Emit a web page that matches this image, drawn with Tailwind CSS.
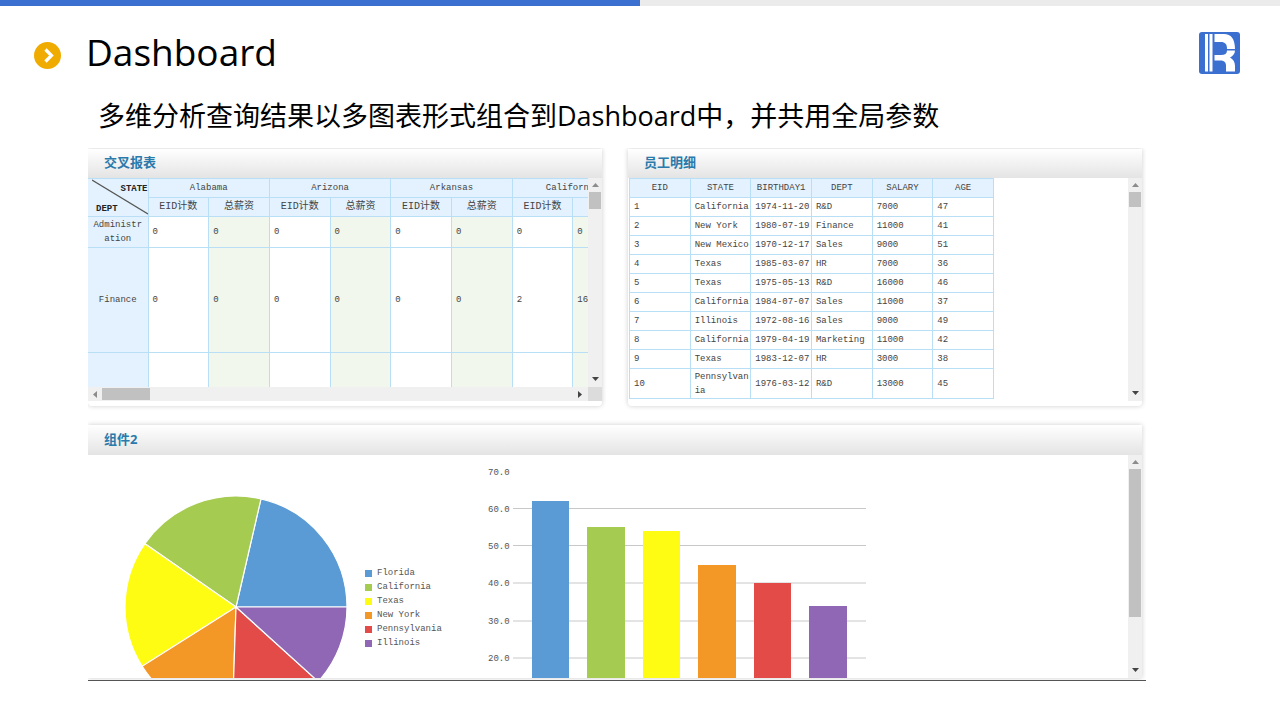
<!DOCTYPE html>
<html lang="zh-CN">
<head>
<meta charset="utf-8">
<meta name="viewport" content="width=device-width, initial-scale=1">
<title>Dashboard</title>
<script src="https://cdn.jsdelivr.net/npm/@tailwindcss/browser@4"></script>
</head>
<body class="bg-white text-black font-['Open_Sans','Noto_Sans_CJK_SC',sans-serif]">
<div class="flex h-[6px]"><div class="w-1/2 bg-[#3b6fd0]"></div><div class="w-1/2 bg-[#ebebeb]"></div></div>

<header class="flex items-start justify-between pl-[34px] pr-[40px] pt-[18px]">
  <div class="flex items-center gap-[25px]">
    <svg class="mt-[6px] size-[27px]" viewBox="0 0 27 27" aria-hidden="true"><circle cx="13.500" cy="13.500" r="13.500" fill="#f0ab00"/><path d="M11.500 7.500l6 6-6 6" fill="none" stroke="#fff" stroke-width="3.200"/></svg>
    <h1 class="text-[37px] leading-[56px]">Dashboard</h1>
  </div>
  <svg class="mt-[8px] h-[42px] w-[41px]" viewBox="0 0 41 42" role="img" aria-label="Logo">
    <rect width="41" height="42" rx="3" fill="#3b6fd0"/>
    <path d="M6 2h3v37.500H6zM10.500 2h3v37.500h-3z" fill="#fff"/>
    <path d="M15.500 2H25C32 2 36 7 36 17H28C28 12 26 10 22 10H15.500z" fill="#fff"/>
    <path d="M28 18.500H36C36 21.500 34 24 31 25.500C34 27 36 30 36 34V39.500H27V34C27 30 25 28.500 21 28.500H15.500V23H22C26 23 28 21.500 28 18.500z" fill="#fff"/>
  </svg>
</header>

<p class="pl-[98px] pt-[17px] text-[27px] leading-[38px]">多维分析查询结果以多图表形式组合到Dashboard中，并共用全局参数</p>

<main class="ml-[88px] mr-[134px] mt-[13px] overflow-hidden border-b border-[#555] pb-[2px] pr-[4px] pt-px">
  <div class="grid grid-cols-2 gap-[26px]">
    <section class="rounded-b-sm bg-white shadow-[0_0_5px_rgba(0,0,0,0.2)]" aria-labelledby="t1">
      <h2 id="t1" class="h-[29px] bg-linear-to-b from-white to-[#e4e4e4] pl-4 text-[13px] leading-[27px] font-bold text-[#2a7aab]">交叉报表</h2>
      <div class="flex">
        <div class="h-[209px] min-w-0 flex-1 overflow-hidden">
          <table class="w-[546px] table-fixed border-collapse font-['Liberation_Mono','Noto_Sans_CJK_SC',monospace] text-[9px] leading-[14px] text-[#444]">
            <colgroup><col class="w-[60px]"><col span="8"></colgroup>
            <thead class="bg-[#e3f2fe] text-center text-[10px]">
              <tr class="h-[19px] text-[9px]">
                <th rowspan="2" class="relative border-b border-r border-t border-[#b8dff6] p-0 font-bold text-[#222]">
                  <svg class="absolute left-[4px] top-0 h-[36px] w-[56px]" viewBox="0 0 56 36" aria-hidden="true"><path d="M0 1L56 35" stroke="#555" stroke-width="1.300" fill="none"/></svg>
                  <div class="flex h-[37px] flex-col justify-between pt-[3px]"><span class="text-right">STATE</span><span class="pl-2 text-left">DEPT</span></div>
                </th>
                <th colspan="2" class="border border-[#b8dff6] p-0 font-normal">Alabama</th>
                <th colspan="2" class="border border-[#b8dff6] p-0 font-normal">Arizona</th>
                <th colspan="2" class="border border-[#b8dff6] p-0 font-normal">Arkansas</th>
                <th colspan="2" class="border border-[#b8dff6] p-0 font-normal">California</th>
              </tr>
              <tr class="h-[19px]">
                <th class="border border-[#b8dff6] p-0 font-normal">EID计数</th><th class="border border-[#b8dff6] p-0 font-normal">总薪资</th>
                <th class="border border-[#b8dff6] p-0 font-normal">EID计数</th><th class="border border-[#b8dff6] p-0 font-normal">总薪资</th>
                <th class="border border-[#b8dff6] p-0 font-normal">EID计数</th><th class="border border-[#b8dff6] p-0 font-normal">总薪资</th>
                <th class="border border-[#b8dff6] p-0 font-normal">EID计数</th><th class="border border-[#b8dff6] p-0 font-normal">总薪资</th>
              </tr>
            </thead>
            <tbody>
              <tr class="h-[31px]">
                <th class="border-y border-r border-[#b8dff6] bg-[#e3f2fe] p-0 text-center font-normal">Administr<br>ation</th>
                <td class="border border-[#b8dff6] px-1 py-0">0</td><td class="border border-[#b8dff6] bg-[#f1f7ed] px-1 py-0">0</td>
                <td class="border border-[#b8dff6] px-1 py-0">0</td><td class="border border-[#b8dff6] bg-[#f1f7ed] px-1 py-0">0</td>
                <td class="border border-[#b8dff6] px-1 py-0">0</td><td class="border border-[#b8dff6] bg-[#f1f7ed] px-1 py-0">0</td>
                <td class="border border-[#b8dff6] px-1 py-0">0</td><td class="border border-[#b8dff6] bg-[#f1f7ed] px-1 py-0">0</td>
              </tr>
              <tr class="h-[105px]">
                <th class="border-y border-r border-[#b8dff6] bg-[#e3f2fe] p-0 text-center font-normal">Finance</th>
                <td class="border border-[#b8dff6] px-1 py-0">0</td><td class="border border-[#b8dff6] bg-[#f1f7ed] px-1 py-0">0</td>
                <td class="border border-[#b8dff6] px-1 py-0">0</td><td class="border border-[#b8dff6] bg-[#f1f7ed] px-1 py-0">0</td>
                <td class="border border-[#b8dff6] px-1 py-0">0</td><td class="border border-[#b8dff6] bg-[#f1f7ed] px-1 py-0">0</td>
                <td class="border border-[#b8dff6] px-1 py-0">2</td><td class="border border-[#b8dff6] bg-[#f1f7ed] px-1 py-0">16000</td>
              </tr>
              <tr class="h-[60px]">
                <th class="border-y border-r border-[#b8dff6] bg-[#e3f2fe] p-0"></th>
                <td class="border border-[#b8dff6]"></td><td class="border border-[#b8dff6] bg-[#f1f7ed]"></td>
                <td class="border border-[#b8dff6]"></td><td class="border border-[#b8dff6] bg-[#f1f7ed]"></td>
                <td class="border border-[#b8dff6]"></td><td class="border border-[#b8dff6] bg-[#f1f7ed]"></td>
                <td class="border border-[#b8dff6]"></td><td class="border border-[#b8dff6] bg-[#f1f7ed]"></td>
              </tr>
            </tbody>
          </table>
        </div>
        <div class="flex w-[14px] flex-col items-center bg-[#f0f0f0]">
          <button type="button" aria-label="向上滚动" class="flex h-[14px] w-full items-center justify-center"><svg class="h-[4px] w-[7px]" viewBox="0 0 7 4"><path d="M0 4L3.500 0 7 4z" fill="#8c8c8c"/></svg></button>
          <div class="h-[17px] w-[12px] bg-[#c1c1c1]"></div>
          <button type="button" aria-label="向下滚动" class="mt-auto flex h-[16px] w-full items-center justify-center"><svg class="h-[4px] w-[7px]" viewBox="0 0 7 4"><path d="M0 0h7L3.500 4z" fill="#444"/></svg></button>
        </div>
      </div>
      <div class="flex h-[14px] items-center bg-[#f0f0f0]">
        <button type="button" aria-label="向左滚动" class="flex h-full w-[14px] items-center justify-center"><svg class="h-[7px] w-[4px]" viewBox="0 0 4 7"><path d="M4 0v7L0 3.500z" fill="#8c8c8c"/></svg></button>
        <div class="h-[12px] w-[48px] bg-[#c1c1c1]"></div>
        <button type="button" aria-label="向右滚动" class="ml-auto flex h-full w-[16px] items-center justify-center"><svg class="h-[7px] w-[4px]" viewBox="0 0 4 7"><path d="M0 0v7L4 3.500z" fill="#444"/></svg></button>
        <div class="h-full w-[14px] bg-[#dcdcdc]"></div>
      </div>
      <div class="h-[5px]"></div>
    </section>

    <section class="rounded-b-sm bg-white shadow-[0_0_5px_rgba(0,0,0,0.2)]" aria-labelledby="t2">
      <h2 id="t2" class="h-[29px] bg-linear-to-b from-white to-[#e4e4e4] pl-4 text-[13px] leading-[27px] font-bold text-[#2a7aab]">员工明细</h2>
      <div class="flex h-[223px]">
        <div class="min-w-0 flex-1 overflow-hidden pl-px">
          <table class="w-[365px] table-fixed border-collapse font-['Liberation_Mono',monospace] text-[9px] leading-[14px] whitespace-nowrap text-[#444] [&_td]:border [&_td]:border-[#b8dff6] [&_td]:py-0 [&_td]:pl-1 [&_td]:pr-0 [&_th]:border [&_th]:border-[#b8dff6] [&_th]:p-0 [&_th]:font-normal">
            <thead class="bg-[#e3f2fe]"><tr class="h-[19px]"><th>EID</th><th>STATE</th><th>BIRTHDAY1</th><th>DEPT</th><th>SALARY</th><th>AGE</th></tr></thead>
            <tbody>
              <tr class="h-[19px]"><td>1</td><td>California</td><td>1974-11-20</td><td>R&amp;D</td><td>7000</td><td>47</td></tr>
              <tr class="h-[19px]"><td>2</td><td>New York</td><td>1980-07-19</td><td>Finance</td><td>11000</td><td>41</td></tr>
              <tr class="h-[19px]"><td>3</td><td>New Mexico</td><td>1970-12-17</td><td>Sales</td><td>9000</td><td>51</td></tr>
              <tr class="h-[19px]"><td>4</td><td>Texas</td><td>1985-03-07</td><td>HR</td><td>7000</td><td>36</td></tr>
              <tr class="h-[19px]"><td>5</td><td>Texas</td><td>1975-05-13</td><td>R&amp;D</td><td>16000</td><td>46</td></tr>
              <tr class="h-[19px]"><td>6</td><td>California</td><td>1984-07-07</td><td>Sales</td><td>11000</td><td>37</td></tr>
              <tr class="h-[19px]"><td>7</td><td>Illinois</td><td>1972-08-16</td><td>Sales</td><td>9000</td><td>49</td></tr>
              <tr class="h-[19px]"><td>8</td><td>California</td><td>1979-04-19</td><td>Marketing</td><td>11000</td><td>42</td></tr>
              <tr class="h-[19px]"><td>9</td><td>Texas</td><td>1983-12-07</td><td>HR</td><td>3000</td><td>38</td></tr>
              <tr class="h-[30px]"><td>10</td><td>Pennsylvan<br>ia</td><td>1976-03-12</td><td>R&amp;D</td><td>13000</td><td>45</td></tr>
            </tbody>
          </table>
        </div>
        <div class="flex w-[14px] flex-col items-center bg-[#f0f0f0]">
          <button type="button" aria-label="向上滚动" class="flex h-[14px] w-full items-center justify-center"><svg class="h-[4px] w-[7px]" viewBox="0 0 7 4"><path d="M0 4L3.500 0 7 4z" fill="#8c8c8c"/></svg></button>
          <div class="h-[15px] w-[12px] bg-[#c1c1c1]"></div>
          <button type="button" aria-label="向下滚动" class="mt-auto flex h-[16px] w-full items-center justify-center"><svg class="h-[4px] w-[7px]" viewBox="0 0 7 4"><path d="M0 0h7L3.500 4z" fill="#444"/></svg></button>
        </div>
      </div>
      <div class="h-[5px]"></div>
    </section>
  </div>

  <section class="mt-[19px] bg-white shadow-[0_0_5px_rgba(0,0,0,0.2)]" aria-labelledby="t3">
    <h2 id="t3" class="h-[30px] bg-linear-to-b from-white to-[#e4e4e4] pl-4 text-[13px] leading-[29px] font-bold text-[#2a7aab]">组件2</h2>
    <div class="flex h-[223px] overflow-hidden">
      <div class="flex flex-1 items-start pl-[37px] font-['Liberation_Mono',monospace] text-[9px] text-[#555]">
        <svg class="mt-[41px] size-[222px] shrink-0" viewBox="0 0 222 222" role="img" aria-label="Pie chart" stroke="#fff" stroke-width="1.200">
          <path d="M111 111L222 111A111 111 0 0 0 135.970 2.840z" fill="#5b9bd5"/>
          <path d="M111 111L135.970 2.840A111 111 0 0 0 19.860 47.650z" fill="#a5cb50"/>
          <path d="M111 111L19.860 47.650A111 111 0 0 0 17.170 170.320z" fill="#fffc14"/>
          <path d="M111 111L17.170 170.320A111 111 0 0 0 107.310 221.940z" fill="#f39826"/>
          <path d="M111 111L107.310 221.940A111 111 0 0 0 193.230 185.560z" fill="#e24b48"/>
          <path d="M111 111L193.230 185.560A111 111 0 0 0 222 111z" fill="#9067b5"/>
        </svg>
        <ul class="ml-[18px] mt-[111px] w-[119px] shrink-0 leading-[14px]">
          <li class="flex items-center gap-[5px]"><span class="size-[7px] bg-[#5b9bd5]"></span>Florida</li>
          <li class="flex items-center gap-[5px]"><span class="size-[7px] bg-[#a5cb50]"></span>California</li>
          <li class="flex items-center gap-[5px]"><span class="size-[7px] bg-[#fffc14]"></span>Texas</li>
          <li class="flex items-center gap-[5px]"><span class="size-[7px] bg-[#f39826]"></span>New York</li>
          <li class="flex items-center gap-[5px]"><span class="size-[7px] bg-[#e24b48]"></span>Pennsylvania</li>
          <li class="flex items-center gap-[5px]"><span class="size-[7px] bg-[#9067b5]"></span>Illinois</li>
        </ul>
        <svg class="h-[223px] w-[386px] shrink-0" viewBox="0 0 386 223" role="img" aria-label="Bar chart">
          <path d="M29 53.500H382M29 90.500H382M29 128H382M29 166H382M29 203H382" stroke="#c8c8c8"/>
          <g fill="#555"><text x="4" y="20">70.0</text><text x="4" y="57">60.0</text><text x="4" y="94">50.0</text><text x="4" y="131">40.0</text><text x="4" y="169">30.0</text><text x="4" y="206">20.0</text></g>
          <rect x="48" y="46" width="37" height="177" fill="#5b9bd5"/>
          <rect x="103" y="72" width="38" height="151" fill="#a5cb50"/>
          <rect x="159" y="76" width="37" height="147" fill="#fffc14"/>
          <rect x="214" y="110" width="38" height="113" fill="#f39826"/>
          <rect x="270" y="128" width="37" height="95" fill="#e24b48"/>
          <rect x="325" y="151" width="38" height="72" fill="#9067b5"/>
        </svg>
      </div>
      <div class="flex w-[14px] shrink-0 flex-col items-center bg-[#f0f0f0]">
        <button type="button" aria-label="向上滚动" class="flex h-[14px] w-full items-center justify-center"><svg class="h-[4px] w-[7px]" viewBox="0 0 7 4"><path d="M0 4L3.500 0 7 4z" fill="#8c8c8c"/></svg></button>
        <div class="h-[148px] w-[12px] bg-[#c1c1c1]"></div>
        <button type="button" aria-label="向下滚动" class="mt-auto flex h-[16px] w-full items-center justify-center"><svg class="h-[4px] w-[7px]" viewBox="0 0 7 4"><path d="M0 0h7L3.500 4z" fill="#444"/></svg></button>
      </div>
    </div>
  </section>
</main>
</body>
</html>
